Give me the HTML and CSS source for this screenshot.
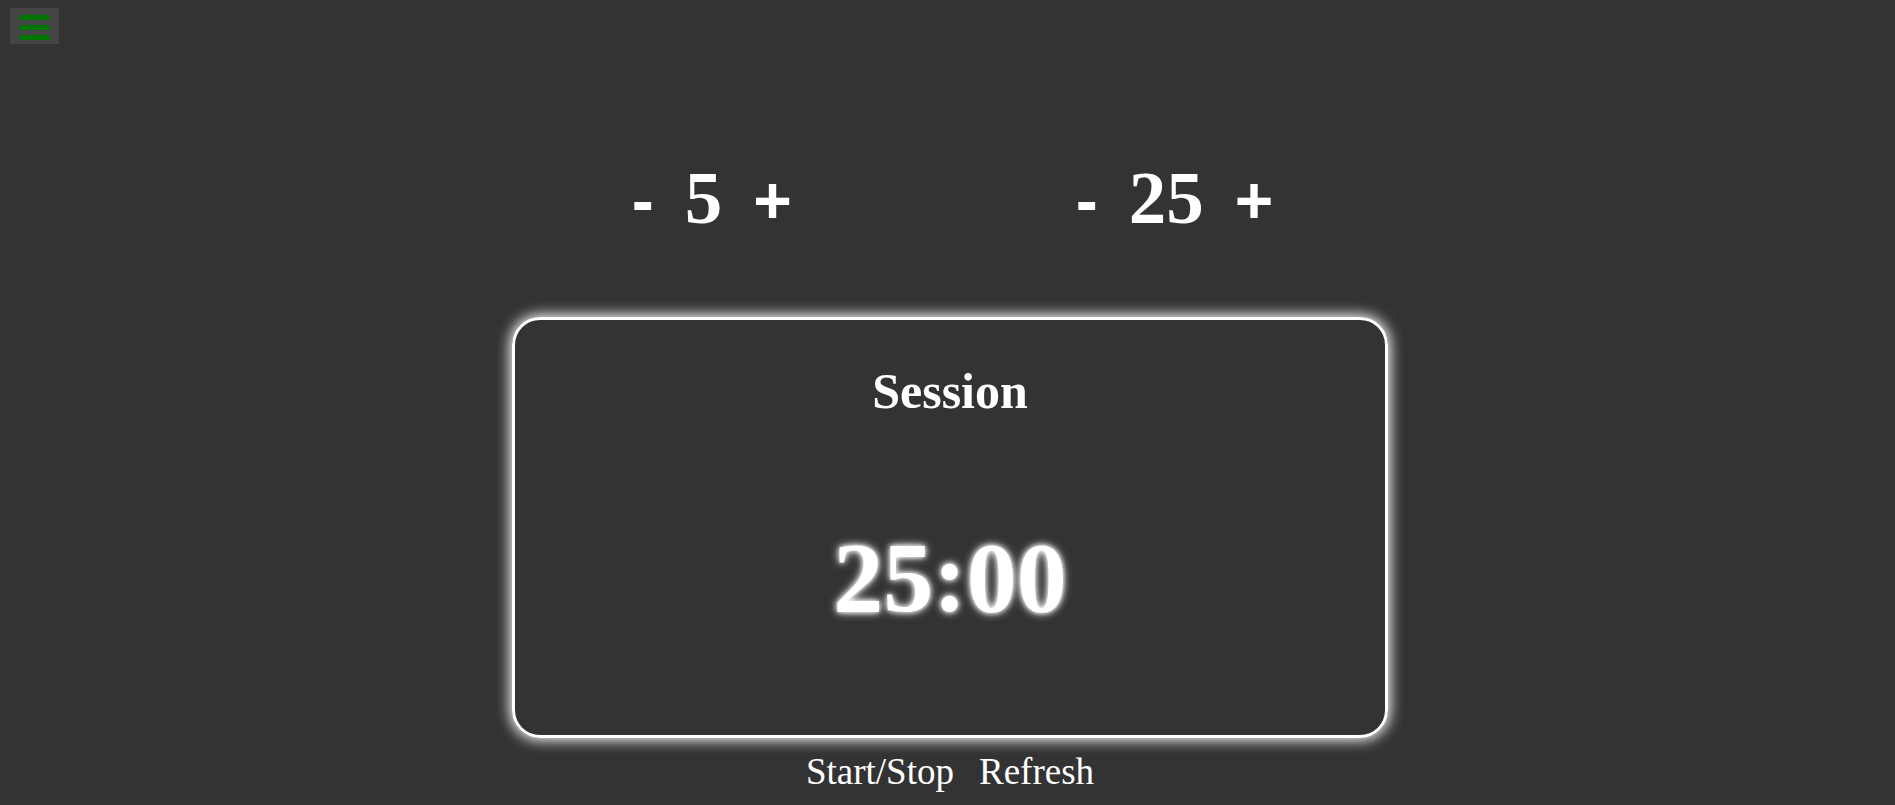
FILE: index.html
```html
<!DOCTYPE html>
<html lang="en">
<head>
<meta charset="utf-8">
<title>Pomodoro</title>
<link rel="stylesheet" href="styles.css">
</head>
<body>
<button class="menu-toggle" aria-label="Menu">
  <span class="bar"></span>
  <span class="bar"></span>
  <span class="bar"></span>
</button>
<main class="app">
  <div class="settings">
    <div class="setting">
      <button class="adjust">-</button>
      <span class="value">5</span>
      <button class="adjust">+</button>
    </div>
    <div class="setting">
      <button class="adjust">-</button>
      <span class="value">25</span>
      <button class="adjust">+</button>
    </div>
  </div>
  <section class="timer-card">
    <h2 class="timer-label">Session</h2>
    <div class="timer-time">25:00</div>
  </section>
  <div class="controls">
    <button class="control">Start/Stop</button>
    <button class="control">Refresh</button>
  </div>
</main>
</body>
</html>
```
FILE: styles.css
```css
html, body {
  margin: 0;
  padding: 0;
}
body {
  background: #333333;
  color: #ffffff;
  font-family: "Liberation Serif", "Times New Roman", serif;
  height: 805px;
  overflow: hidden;
}
.menu-toggle {
  position: fixed;
  top: 8px;
  left: 10px;
  width: 49px;
  height: 36px;
  padding: 7px 0 0 9px;
  margin: 0;
  border: none;
  background: #444444;
  display: flex;
  flex-direction: column;
  gap: 5px;
  box-sizing: border-box;
}
.menu-toggle .bar {
  display: block;
  width: 31px;
  height: 5px;
  border-radius: 3px;
  background: #007400;
}
.app {
  display: flex;
  flex-direction: column;
  align-items: center;
  padding-left: 5px;
}
.settings {
  display: flex;
  align-items: baseline;
  gap: 284px;
  margin-top: 162px;
  margin-left: 5px;
}
.setting {
  display: flex;
  align-items: baseline;
  gap: 31px;
}
.adjust {
  font-family: "Liberation Sans", Arial, sans-serif;
  font-weight: bold;
  font-size: 66px;
  line-height: 72px;
  color: #ffffff;
  background: none;
  border: none;
  padding: 0;
  margin: 0;
}
.value {
  font-weight: bold;
  font-size: 75px;
  line-height: 72px;
}
.timer-card {
  margin-top: 81px;
  width: 876px;
  height: 421px;
  box-sizing: border-box;
  border: 3px solid #ffffff;
  border-radius: 28px;
  box-shadow: 0 0 14px 2px #ffffff;
  display: flex;
  flex-direction: column;
  align-items: center;
  padding-top: 46px;
}
.timer-label {
  margin: 0;
  font-weight: bold;
  font-size: 50px;
  line-height: 50px;
}
.timer-time {
  margin-top: 110px;
  font-weight: bold;
  font-size: 100px;
  line-height: 104px;
  text-shadow: 0 0 10px #ffffff, 0 0 5px #ffffff;
}
.controls {
  display: flex;
  gap: 25px;
  margin-top: 15px;
}
.control {
  font-family: "Liberation Serif", "Times New Roman", serif;
  font-size: 37px;
  line-height: 37px;
  color: #ffffff;
  background: none;
  border: none;
  padding: 0;
  margin: 0;
}
```
